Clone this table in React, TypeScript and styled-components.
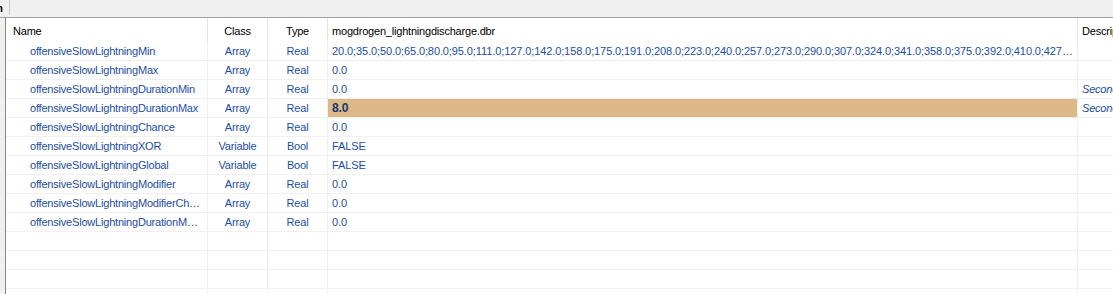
import React from "react";
import styled, { createGlobalStyle, css } from "styled-components";

const Global = createGlobalStyle`
  html, body { margin: 0; padding: 0; overflow: hidden; background: #f0f0f0; }
  body { font-family: "Liberation Sans", Arial, sans-serif; }
`;

const Page = styled.div`
  width: 1113px;
  height: 294px;
  display: flex;
  flex-direction: column;
  overflow: hidden;
  background: #f0f0f0;
`;

const TopStrip = styled.div`
  height: 17px;
  flex: none;
  display: flex;
  align-items: flex-start;
  background: #f0f0f0;
  border-bottom: 1px solid #a0a0a0;
  overflow: hidden;
`;

const ClippedLabel = styled.span`
  display: block;
  width: 3px;
  overflow: hidden;
  direction: rtl;
  font-size: 11px;
  font-weight: bold;
  line-height: 11px;
  margin-top: 3px;
  color: #000;
`;

const StripDivider = styled.span`
  width: 1px;
  height: 15px;
  margin-left: 6px;
  background: #c8c8c8;
`;

const Body = styled.div`
  flex: 1;
  display: flex;
  min-height: 0;
`;

const Gutter = styled.div`
  width: 5px;
  flex: none;
  background: #f0f0f0;
`;

const Frame = styled.div`
  flex: 1;
  border-left: 1px solid #828790;
  background: #fff;
  overflow: hidden;
  font-size: 11px;
  letter-spacing: -0.2px;
`;

const Row = styled.div`
  display: grid;
  grid-template-columns: 202px 60px 60px 750px 200px;
`;

type Align = "left" | "center";

const HeaderCell = styled.div<{ $align?: Align; $pad?: number }>`
  height: 24px;
  box-sizing: border-box;
  padding-top: 7px;
  padding-left: ${(p) => p.$pad ?? 4}px;
  text-align: ${(p) => p.$align ?? "left"};
  border-right: 1px solid #e5e5e5;
  color: #000;
  white-space: nowrap;
  overflow: hidden;
  ${(p) => p.$align === "center" && css`padding-left: 0;`}
`;

const Cell = styled.div<{
  $align?: Align;
  $pad?: number;
  $highlight?: boolean;
  $italic?: boolean;
  $numeric?: boolean;
}>`
  height: 19px;
  box-sizing: border-box;
  line-height: 18px;
  padding-left: ${(p) => p.$pad ?? 4}px;
  padding-right: 4px;
  text-align: ${(p) => p.$align ?? "left"};
  border-right: 1px solid #f0f0f0;
  border-bottom: 1px solid #f0f0f0;
  color: #1c4ea2;
  white-space: nowrap;
  overflow: hidden;
  text-overflow: ellipsis;
  font-style: ${(p) => (p.$italic ? "italic" : "normal")};
  ${(p) => p.$numeric && css`letter-spacing: -0.1px;`}
  ${(p) => p.$align === "center" && css`padding-left: 0; padding-right: 0;`}
  ${(p) =>
    p.$highlight &&
    css`
      background: #deb887;
      font-weight: bold;
      font-size: 12px;
      color: #123a78;
    `}
`;

type Item = {
  name: string;
  cls: string;
  type: string;
  value: string;
  desc?: string;
  highlight?: boolean;
};

const longValue =
  "20.0;35.0;50.0;65.0;80.0;95.0;111.0;127.0;142.0;158.0;175.0;191.0;208.0;223.0;240.0;257.0;273.0;290.0;307.0;324.0;341.0;358.0;375.0;392.0;410.0;427.0;444.0;461.0;478.0;495.0";

const items: Item[] = [
  { name: "offensiveSlowLightningMin", cls: "Array", type: "Real", value: longValue },
  { name: "offensiveSlowLightningMax", cls: "Array", type: "Real", value: "0.0" },
  { name: "offensiveSlowLightningDurationMin", cls: "Array", type: "Real", value: "0.0", desc: "Seconds" },
  { name: "offensiveSlowLightningDurationMax", cls: "Array", type: "Real", value: "8.0", desc: "Seconds", highlight: true },
  { name: "offensiveSlowLightningChance", cls: "Array", type: "Real", value: "0.0" },
  { name: "offensiveSlowLightningXOR", cls: "Variable", type: "Bool", value: "FALSE" },
  { name: "offensiveSlowLightningGlobal", cls: "Variable", type: "Bool", value: "FALSE" },
  { name: "offensiveSlowLightningModifier", cls: "Array", type: "Real", value: "0.0" },
  { name: "offensiveSlowLightningModifierChance", cls: "Array", type: "Real", value: "0.0" },
  { name: "offensiveSlowLightningDurationModifier", cls: "Array", type: "Real", value: "0.0" },
];

export default function App() {
  return (
    <>
      <Global />
      <Page>
        <TopStrip>
          <ClippedLabel>n</ClippedLabel>
          <StripDivider />
        </TopStrip>
        <Body>
          <Gutter />
          <Frame>
            <Row>
              <HeaderCell $pad={7}>Name</HeaderCell>
              <HeaderCell $align="center">Class</HeaderCell>
              <HeaderCell $align="center">Type</HeaderCell>
              <HeaderCell>mogdrogen_lightningdischarge.dbr</HeaderCell>
              <HeaderCell>Description</HeaderCell>
            </Row>
            {items.map((it) => (
              <Row key={it.name}>
                <Cell $pad={24}>{it.name}</Cell>
                <Cell $align="center">{it.cls}</Cell>
                <Cell $align="center">{it.type}</Cell>
                <Cell $numeric $highlight={it.highlight}>{it.value}</Cell>
                <Cell $italic>{it.desc ?? ""}</Cell>
              </Row>
            ))}
            {[0, 1, 2, 3].map((i) => (
              <Row key={`empty-${i}`}>
                <Cell />
                <Cell />
                <Cell />
                <Cell />
                <Cell />
              </Row>
            ))}
          </Frame>
        </Body>
      </Page>
    </>
  );
}
